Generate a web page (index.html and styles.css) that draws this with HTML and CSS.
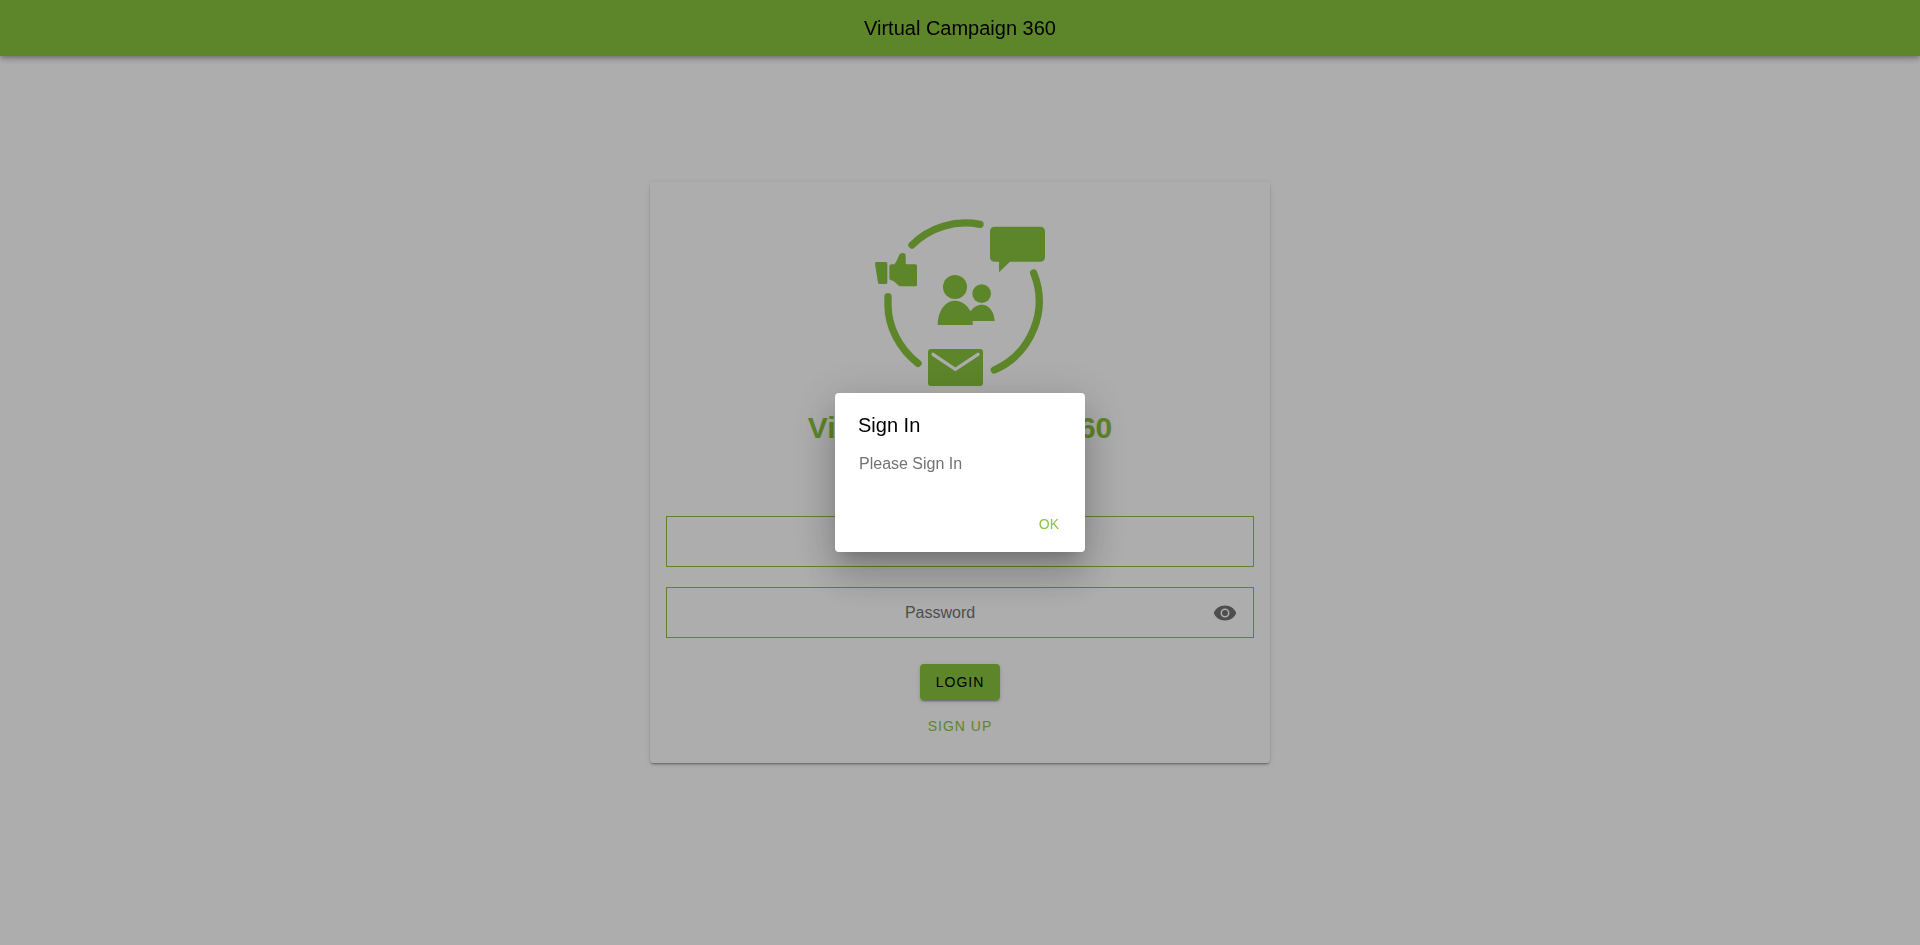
FILE: index.html
```html
<!DOCTYPE html>
<html lang="en">
<head>
    <meta charset="UTF-8">
    <meta name="viewport" content="width=device-width, initial-scale=1.0">
    <title>Virtual Campaign 360</title>
    <link rel="stylesheet" href="styles.css">
</head>
<body>
    <header class="toolbar">Virtual Campaign 360</header>

    <main class="content">
        <form class="card" id="login-form">
            <svg class="logo" viewBox="0 0 600 570" aria-hidden="true">
                <!-- ring -->
                <g class="ring">
                    <path d="M156 105A228 228 0 0 1 360 43"/>
                    <path d="M521 189A226 226 0 0 1 403 480"/>
                    <path d="M84 260V285C84 350 118 417 174 460"/>
                </g>
                <!-- thumb -->
                <path d="M49 156H78Q82 156 82 160V218Q82 222 78 222H59Q55 222 54 218L45 162Q44 156 49 156Z"/>
                <path d="M94 163H103C110 156 114 142 119 133Q122 129 128 129Q137 129 137 137V158Q137 163 142 163H166Q171 163 171 168V224Q171 229 166 229H118L104 216Q99 212 93 211Q88 210 88 205V169Q88 163 94 163Z"/>
                <!-- speech bubble -->
                <path d="M405 50H540Q555 50 555 65V140Q555 155 540 155H450L417 187V155H405Q390 155 390 140V65Q390 50 405 50Z"/>
                <!-- people -->
                <circle cx="285" cy="231" r="36"/>
                <circle cx="365" cy="251" r="28"/>
                <path d="M233 345C234 301 256 272 285 272C305 272 322 285 332 304C340 291 352 284 366 284C387 284 403 305 404 333H338V345Z"/>
                <!-- envelope -->
                <rect x="204" y="417" width="165" height="111" rx="9"/>
                <path class="flap" d="M219 433L286 478L354 433"/>
            </svg>

            <h1 class="title">Virtual Campaign 360</h1>

            <div class="field">
                <input type="email" id="email" aria-label="Email">
            </div>
            <div class="field">
                <input type="password" id="password" placeholder="Password" aria-label="Password">
                <button type="button" class="eye" id="toggle" aria-label="Show password">
                    <svg viewBox="0 0 512 512" aria-hidden="true">
                        <circle cx="256" cy="256" r="64"/>
                        <path d="M256 96C144 96 48 160 16 256c32 96 128 160 240 160s208-64 240-160c-32-96-128-160-240-160zm0 256a96 96 0 1 1 0-192 96 96 0 0 1 0 192z"/>
                    </svg>
                </button>
            </div>

            <button type="submit" class="login">LOGIN</button>
            <button type="button" class="signup">SIGN UP</button>
        </form>
    </main>

    <div class="backdrop" id="alert">
        <div class="alert" role="alertdialog" aria-labelledby="alert-title" aria-describedby="alert-message">
            <h2 id="alert-title">Sign In</h2>
            <p id="alert-message">Please Sign In</p>
            <div class="alert-buttons">
                <button type="button" id="alert-ok">OK</button>
            </div>
        </div>
    </div>

    <script>
        var alertBox = document.getElementById("alert");

        document.getElementById("alert-ok").addEventListener("click", function() {
            alertBox.hidden = true;
        });

        document.getElementById("login-form").addEventListener("submit", function(event) {
            event.preventDefault();
            alertBox.hidden = false;
        });

        document.getElementById("toggle").addEventListener("click", function() {
            var password = document.getElementById("password");
            password.type = password.type === "password" ? "text" : "password";
        });
    </script>
</body>
</html>
```
FILE: styles.css
```css
* {
    box-sizing: border-box;
}

body {
    margin: 0;
    min-height: 100vh;
    font-family: "Liberation Sans", Arial, sans-serif;
    background-color: #fff;
}

button,
input {
    font-family: inherit;
    border: none;
    background: none;
}

button {
    cursor: pointer;
}

.toolbar {
    position: fixed;
    top: 0;
    left: 0;
    right: 0;
    height: 56px;
    line-height: 56px;
    text-align: center;
    font-size: 20px;
    color: #000;
    background-color: #8ac53e;
    box-shadow: 0 2px 4px -1px rgba(0, 0, 0, 0.2), 0 4px 5px 0 rgba(0, 0, 0, 0.14), 0 1px 10px 0 rgba(0, 0, 0, 0.12);
}

.content {
    min-height: 100vh;
    display: flex;
    align-items: center;
    justify-content: center;
}

.card {
    width: 100%;
    max-width: 620px;
    padding: 28px 16px 19px;
    display: flex;
    flex-direction: column;
    align-items: center;
    border-radius: 4px;
    box-shadow: 0 3px 1px -2px rgba(0, 0, 0, 0.2), 0 2px 2px 0 rgba(0, 0, 0, 0.14), 0 1px 5px 0 rgba(0, 0, 0, 0.12);
}

.logo {
    width: 200px;
    height: 190px;
    fill: #8ac53e;
}

.ring {
    fill: none;
    stroke: #8ac53e;
    stroke-width: 22;
    stroke-linecap: round;
}

.flap {
    fill: none;
    stroke: #fff;
    stroke-width: 10;
    stroke-linecap: round;
}

.title {
    margin: 10px 0 70px;
    font-size: 30px;
    line-height: 36px;
    color: #8ac53e;
}

.field {
    width: 100%;
    height: 51px;
    margin-bottom: 20px;
    padding: 0 16px;
    display: flex;
    align-items: center;
    gap: 16px;
    border: 1px solid #8ac53e;
}

.field input {
    flex: 1;
    min-width: 0;
    height: 100%;
    padding: 0;
    text-align: center;
    font-size: 16px;
    outline: none;
}

.field input::placeholder {
    color: #737373;
}

.eye {
    width: 24px;
    height: 24px;
    padding: 0;
}

.eye svg {
    display: block;
    fill: #737373;
}

.login,
.signup {
    height: 36px;
    font-size: 14px;
    letter-spacing: 1px;
}

.login {
    margin: 6px 0 8px;
    padding: 0 16px;
    border-radius: 4px;
    color: #000;
    background-color: #8ac53e;
    box-shadow: 0 3px 1px -2px rgba(0, 0, 0, 0.2), 0 2px 2px 0 rgba(0, 0, 0, 0.14), 0 1px 5px 0 rgba(0, 0, 0, 0.12);
}

.signup {
    color: #8ac53e;
}

.backdrop {
    position: fixed;
    inset: 0;
    display: flex;
    align-items: center;
    justify-content: center;
    background-color: rgba(0, 0, 0, 0.32);
}

.backdrop[hidden] {
    display: none;
}

.alert {
    width: 250px;
    border-radius: 4px;
    background-color: #fff;
    box-shadow: 0 11px 15px -7px rgba(0, 0, 0, 0.2), 0 24px 38px 3px rgba(0, 0, 0, 0.14), 0 9px 46px 8px rgba(0, 0, 0, 0.12);
}

.alert h2 {
    margin: 0;
    padding: 20px 23px 17px;
    font-size: 20px;
    line-height: 24px;
    font-weight: normal;
}

.alert p {
    margin: 0;
    padding: 0 24px 32px;
    font-size: 16px;
    line-height: 20px;
    color: #737373;
}

.alert-buttons {
    display: flex;
    justify-content: flex-end;
    padding: 0 16px 10px;
}

.alert-buttons button {
    height: 36px;
    padding: 0 10px;
    font-size: 14px;
    color: #8ac53e;
}
```
